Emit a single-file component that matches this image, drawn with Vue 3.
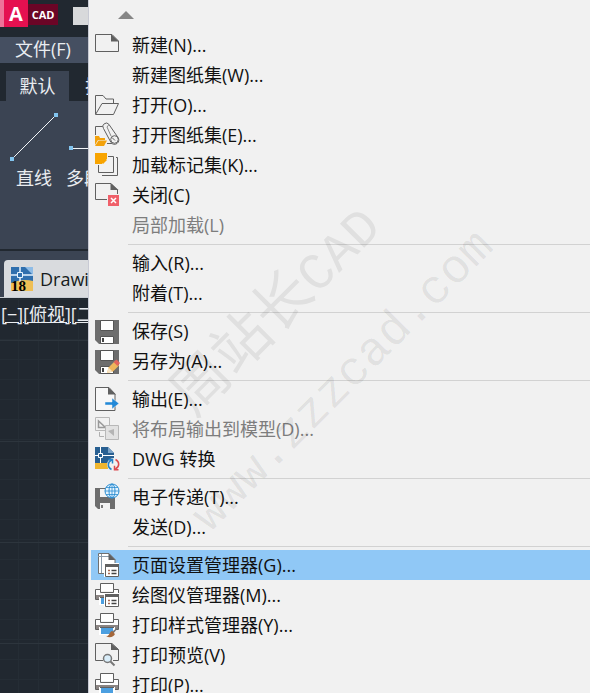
<template>
    <div class="app">
        <aside class="workspace">
            <header class="title-bar">
                <span class="logo-a">A</span>
                <span class="logo-cad">CAD</span>
                <span class="title-box"></span>
            </header>
            <div class="menu-bar">
                <button class="plain">文件(F)</button>
            </div>
            <div class="tabs">
                <button class="tab active">默认</button>
                <button class="tab">插入</button>
            </div>
            <div class="ribbon">
                <button class="tool">
                    <svg width="48" height="50" viewBox="0 0 48 50">
                        <path d="M2 47L46 3" stroke="#f2f5f8" />
                        <path d="M0 45h4v4H0zM44 1h4v4h-4z" fill="#82c4ee" />
                    </svg>
                    <span>直线</span>
                </button>
                <button class="tool">
                    <svg width="48" height="50" viewBox="0 0 48 50">
                        <path d="M6 36.500h42" stroke="#f2f5f8" />
                        <path d="M3 34h4v4H3z" fill="#82c4ee" />
                    </svg>
                    <span>多段线</span>
                </button>
            </div>
            <div class="file-tabs">
                <button class="file-tab">
                    <svg width="22" height="26" viewBox="0 0 22 26">
                        <path d="M0 1h16l6 6v18H0z" fill="#2f6fae" />
                        <path d="M14 1l8 8V1z" fill="#8fbce6" />
                        <path d="M0 17q12-5 22-2v10H0z" fill="#efbf55" />
                        <path d="M0 9h22M9 1v15" stroke="#e6f4ff" stroke-width="1.500" />
                        <path d="M6.500 6.500h5v5h-5z" fill="#2f6fae" stroke="#e6f4ff" />
                        <text x="0" y="25" font-family="Liberation Serif, serif" font-size="15" font-weight="700" fill="#000">18</text>
                    </svg>
                    <span>Drawing1</span>
                </button>
            </div>
            <div class="canvas">
                <span class="view-label">[−][俯视][二维线框]</span>
            </div>
        </aside>

        <nav class="menu">
            <button class="scroll-up" aria-label="向上滚动">
                <svg width="16" height="8" viewBox="0 0 16 8"><path d="M8 0l8 8H0z" fill="#868686" /></svg>
            </button>
            <div v-for="(group, i) in groups" :key="i" class="group">
                <button
                    v-for="item in group"
                    :key="item.text"
                    class="item"
                    :class="{ selected: item.text === selected }"
                    :disabled="item.disabled"
                    @mouseenter="selected = item.text"
                >
                    <svg class="icon" viewBox="0 0 24 24" fill="none" v-html="icons[item.icon]"></svg>
                    <span>{{ item.text }}</span>
                </button>
            </div>
            <svg class="watermark" width="500" height="693" viewBox="0 0 500 693" aria-hidden="true">
                <text class="mark-name" x="105" y="418" transform="rotate(-45 105 418)">周站长<tspan class="mark-latin">CAD</tspan></text>
                <text class="mark-mono" x="121" y="533" transform="rotate(-45 121 533)">www.zzzcad.com</text>
            </svg>
        </nav>
    </div>
</template>

<script setup>
import { ref } from 'vue';

const selected = ref('页面设置管理器(G)...');

const groups = [
    [
        { text: '新建(N)...', icon: 'new' },
        { text: '新建图纸集(W)...' },
        { text: '打开(O)...', icon: 'open' },
        { text: '打开图纸集(E)...', icon: 'openSet' },
        { text: '加载标记集(K)...', icon: 'markup' },
        { text: '关闭(C)', icon: 'close' },
        { text: '局部加载(L)', disabled: true }
    ],
    [
        { text: '输入(R)...' },
        { text: '附着(T)...' }
    ],
    [
        { text: '保存(S)', icon: 'save' },
        { text: '另存为(A)...', icon: 'saveAs' }
    ],
    [
        { text: '输出(E)...', icon: 'export' },
        { text: '将布局输出到模型(D)...', icon: 'layout', disabled: true },
        { text: 'DWG 转换', icon: 'dwg' }
    ],
    [
        { text: '电子传递(T)...', icon: 'transmit' },
        { text: '发送(D)...' }
    ],
    [
        { text: '页面设置管理器(G)...', icon: 'pageSetup' },
        { text: '绘图仪管理器(M)...', icon: 'plotter' },
        { text: '打印样式管理器(Y)...', icon: 'plotStyle' },
        { text: '打印预览(V)', icon: 'preview' },
        { text: '打印(P)...', icon: 'print' }
    ]
];

const floppy = `
    <path d="M0 1h24v24H4l-4-4z" fill="#6d6d6d"/>
    <path d="M5.500 1.500h13v10h-13z" fill="#fff" stroke="#555"/>
    <path d="M5.500 17.500h13v7h-13z" fill="#fff" stroke="#555"/>
    <path d="M8 19v4" stroke="#444" stroke-width="2"/>`;

const printer = `
    <path d="M5.500 8V.5h13V8" fill="#fff" stroke="#606060"/>
    <path d="M.5 6.500h5v3h13v-3h5v10H.5z" fill="#fff" stroke="#606060"/>
    <path d="M1 12h22v4H1z" fill="#8b8583"/>
    <path d="M4 14h16v8H4z" fill="#fff"/>
    <path d="M5 14.500h14" stroke="#606060"/>
    <path d="M6 15h12v6H6z" fill="#4c9fe0"/>`;

const dialog = `
    <path d="M9 10h15v14H9z" fill="#fff"/>
    <path d="M10.500 11.500h13v12h-13z" fill="#fff" stroke="#606060"/>
    <path d="M10 11h14v3H10z" fill="#606060"/>
    <path d="M13 17.500h2m-2 3h2" stroke="#a86a50" stroke-width="1.500"/>
    <path d="M16.500 17.500h5m-5 3h5" stroke="#444" stroke-width="1.500"/>`;

const icons = {
    new: `
        <path d="M.5 1.500H17l6.500 6.500v10.500H.5z" stroke="#606060"/>
        <path d="M16 1l8 7.500h-8z" fill="#606060"/>`,
    open: `
        <path d="M.5 21V2.500H8l3 3.500h7.500v4" stroke="#606060"/>
        <path d="M.5 21.500L7 10.500h16.500l-5 11z" stroke="#606060"/>`,
    openSet: `
        <path d="M.5 12V3.500H9M12 20.500h8" stroke="#606060"/>
        <path d="M8.500 5.500a3.200 3.200 0 0 1 5.500-4l9 13a4.300 4.300 0 0 1-7 5z" fill="#f1f1f1" stroke="#606060"/>
        <path d="M14 1.500l-2 2.500 4 9" stroke="#888"/>
        <circle cx="19.500" cy="16.500" r="3.800" fill="#f1f1f1" stroke="#606060"/>
        <path d="M17 14.500l3 3" stroke="#606060"/>
        <path d="M0 13h4l1 2h5v2H3l-3 5z" fill="#f3a20b"/>
        <path d="M3.500 17.500H12L9 23H0z" fill="#f3a20b"/>`,
    markup: `
        <path d="M7 22.500h15.500v-18H21" stroke="#606060"/>
        <path d="M3.500 12v7.500h15v-16H13" stroke="#606060"/>
        <path d="M0 0h12v6l-5 5H0z" fill="#f8a400"/>
        <path d="M12 7H8v4z" fill="#f8a400"/>`,
    close: `
        <path d="M12 16.500H.5V.5H16l6.500 6.500v4" stroke="#606060"/>
        <path d="M15.500 0l8 7h-8z" fill="#606060"/>
        <path d="M13 12h11v11H13z" fill="#f0606a"/>
        <path d="M16 15l5 5m0-5l-5 5" stroke="#fff" stroke-width="1.500"/>`,
    save: floppy,
    saveAs: `${floppy}
        <path d="M12 24l1.500-5.500 6-6 4.500 4-6 6z" fill="#edb65c"/>
        <path d="M18.500 13l3-2.500 3.500 3.500-2.500 3z" fill="#e2655c"/>
        <path d="M12 24l1.500-5.500 4 4z" fill="#f7e3c2"/>`,
    export: `
        <path d="M.5.5H14l6 6.500v16.500H.5z" fill="#f7f7f7" stroke="#606060"/>
        <path d="M13 0l8 7.500h-8z" fill="#606060"/>
        <path d="M10 15h7v-4l7 5.500-7 5.500v-4h-7z" fill="#2289d8" stroke="#f1f1f1" stroke-width=".5"/>`,
    layout: `
        <path d="M.5.5h14v13H.5z" stroke="#b8b8b8"/>
        <path d="M3.500 4v6.500h7z" stroke="#999" stroke-width="1.500"/>
        <path d="M10.500 8.500h13v14h-13z" fill="#e2e2e2" stroke="#b8b8b8"/>
        <path d="M4.500 15v4.500H9" stroke="#b0b0b0"/>
        <path d="M19 12v7l-6-5z" fill="#b4b4b4"/>`,
    dwg: `
        <path d="M0 0h13l6 6v10H0z" fill="#285f91"/>
        <path d="M13 0l6 6h-6z" fill="#7ba3c8"/>
        <path d="M0 16h13v6H0z" fill="#f0b62f"/>
        <path d="M0 8.500h19M5.500 0v16" stroke="#fff"/>
        <path d="M3.500 6.500h4v4h-4z" fill="#285f91" stroke="#fff"/>
        <circle cx="18.500" cy="17.500" r="6.500" fill="#f1f1f1"/>
        <path d="M16.500 22.500c-4-2-4.500-7 0-9.500m-3-.5h4v4" stroke="#2583c9" stroke-width="1.500"/>
        <path d="M20.500 12.500c4 2 4.500 7 0 9.500m3 .8h-4v-4" stroke="#dc4b50" stroke-width="1.500"/>`,
    transmit: `
        <path d="M0 3h20v21H3l-3-3z" fill="#6d6d6d"/>
        <path d="M5 4h10v8H5zM5 18h10v6H5z" fill="#f4f4f4"/>
        <path d="M7 20v3" stroke="#555" stroke-width="1.500"/>
        <circle cx="17" cy="6" r="7" fill="#e4f4ff" stroke="#2b8dd2"/>
        <ellipse cx="17" cy="6" rx="3" ry="7" stroke="#2b8dd2"/>
        <path d="M10 6h14M17-1v14M11 2.500h12m-12 7h12" stroke="#2b8dd2" stroke-width=".8"/>`,
    pageSetup: `
        <path d="M3.500.5H14l6 6v14H3.500z" fill="#fff" stroke="#707070"/>
        <path d="M6.500 1v19M3 3.500h11" stroke="#8a9aa8"/>
        <path d="M13.500 0l7 7h-7z" fill="#606060"/>${dialog}`,
    plotter: printer + dialog,
    plotStyle: `${printer}
        <path d="M24 13.500l-5.500 7-2-1.500z" fill="#777"/>
        <path d="M17 18l3 3c-1 3-5 4-9 2.500 4-.5 3-4.500 6-5.500z" fill="#a5673a"/>`,
    preview: `
        <path d="M8 17.500H.5v-17H17l6.500 6v11H18" stroke="#606060"/>
        <path d="M16 0l8 7h-8z" fill="#606060"/>
        <circle cx="12.500" cy="15.500" r="4" fill="#d9edf9" stroke="#777" stroke-width="1.500"/>
        <path d="M15.500 18.500l4 4" stroke="#777" stroke-width="2"/>`,
    print: printer
};
</script>

<style>
body {
    background: #f1f1f1;
}
</style>

<style scoped>
.app {
    display: grid;
    grid-template-columns: 88px 1fr;
    height: 100vh;
    overflow: hidden;
    font-family: "Open Sans", "Noto Sans CJK SC", sans-serif;
    font-size: 18px;
}

button {
    margin: 0;
    padding: 0;
    border: 0;
    background: none;
    color: inherit;
    font: inherit;
    line-height: 24px;
    white-space: nowrap;
}

.workspace {
    display: flex;
    flex-direction: column;
    min-width: 0;
    overflow: hidden;
    background: #212830;
    color: #e9ecf0;
}

.title-bar {
    display: flex;
    align-items: flex-start;
    height: 37px;
    flex: none;
}

.logo-a {
    width: 24px;
    border-left: 4px solid #ee7399;
    background: #e51050;
    color: #fff;
    font: 700 20px/27px "Open Sans", sans-serif;
    text-align: center;
}

.logo-cad {
    width: 30px;
    margin-top: 4px;
    background: #6b0526;
    color: #fff;
    font: 700 11px/21px "Open Sans", sans-serif;
    text-align: center;
}

.title-box {
    flex: 1;
    height: 18px;
    margin: 7px 0 0 15px;
    background: #d8d9db;
}

.menu-bar {
    flex: none;
    height: 26px;
    padding-left: 15px;
    background: #454f61;
}

.tabs {
    display: flex;
    flex: none;
    gap: 16px;
    height: 30px;
    padding: 8px 0 0 6px;
}

.tab {
    flex: none;
    line-height: 30px;
}

.tab.active {
    width: 63px;
    background: #3b4453;
}

.ribbon {
    display: flex;
    flex: none;
    gap: 8px;
    height: 148px;
    padding-left: 10px;
    background: #3b4453;
}

.tool {
    display: flex;
    flex: none;
    flex-direction: column;
    align-items: center;
    gap: 4px;
    width: 48px;
    padding-top: 11px;
}

.tool + .tool {
    align-items: flex-start;
}

.file-tabs {
    flex: none;
    margin-top: 2px;
    padding: 9px 0 0 4px;
    border-bottom: 1px solid #c9ced4;
    background: #3b4453;
}

.file-tab {
    display: flex;
    align-items: center;
    gap: 7px;
    width: 140px;
    height: 37px;
    padding-left: 7px;
    border-radius: 4px 0 0 0;
    background: #d9dbde;
    color: #171b20;
}

.canvas {
    flex: 1;
    background-color: #212830;
    background-image:
        linear-gradient(#2d353d 1px, transparent 1px),
        linear-gradient(#252d35 1px, transparent 1px),
        linear-gradient(90deg, #252d35 1px, transparent 1px);
    background-position: 0 42px, 0 1px, 18px 0;
    background-size: 100% 101px, 100% 20px, 20px 100%;
}

.view-label {
    display: block;
    padding-left: 1px;
    font-size: 18px;
    line-height: 32px;
    white-space: nowrap;
    text-decoration: underline;
    text-decoration-thickness: 1px;
}

.menu {
    position: relative;
    min-width: 0;
    overflow: hidden;
    border-left: 1px solid #c8cad4;
    background: #f1f1f1;
    color: #111;
}

.scroll-up {
    display: flex;
    align-items: center;
    width: 100%;
    height: 30px;
    padding-left: 29px;
}

.group + .group::before {
    content: "";
    display: block;
    height: 1px;
    margin: 4px 0 3px 39px;
    background: #d2d2d2;
}

.item {
    display: flex;
    align-items: center;
    gap: 13px;
    width: calc(100% - 2px);
    height: 30px;
    margin-left: 2px;
    padding-left: 4px;
}

.item.selected {
    background: #90c8f6;
}

.item:disabled {
    color: #7d7d7d;
}

.icon {
    flex: none;
    width: 24px;
    height: 24px;
    overflow: visible;
}

.watermark {
    position: absolute;
    top: 0;
    left: 0;
    fill: #000;
    fill-opacity: 0.07;
    pointer-events: none;
}

.mark-name {
    font-family: "Noto Sans CJK SC", sans-serif;
    font-size: 58px;
}

.mark-latin {
    font-family: "Liberation Mono", monospace;
    font-size: 52px;
}

.mark-mono {
    font-family: "Liberation Mono", monospace;
    font-size: 48px;
}
</style>
